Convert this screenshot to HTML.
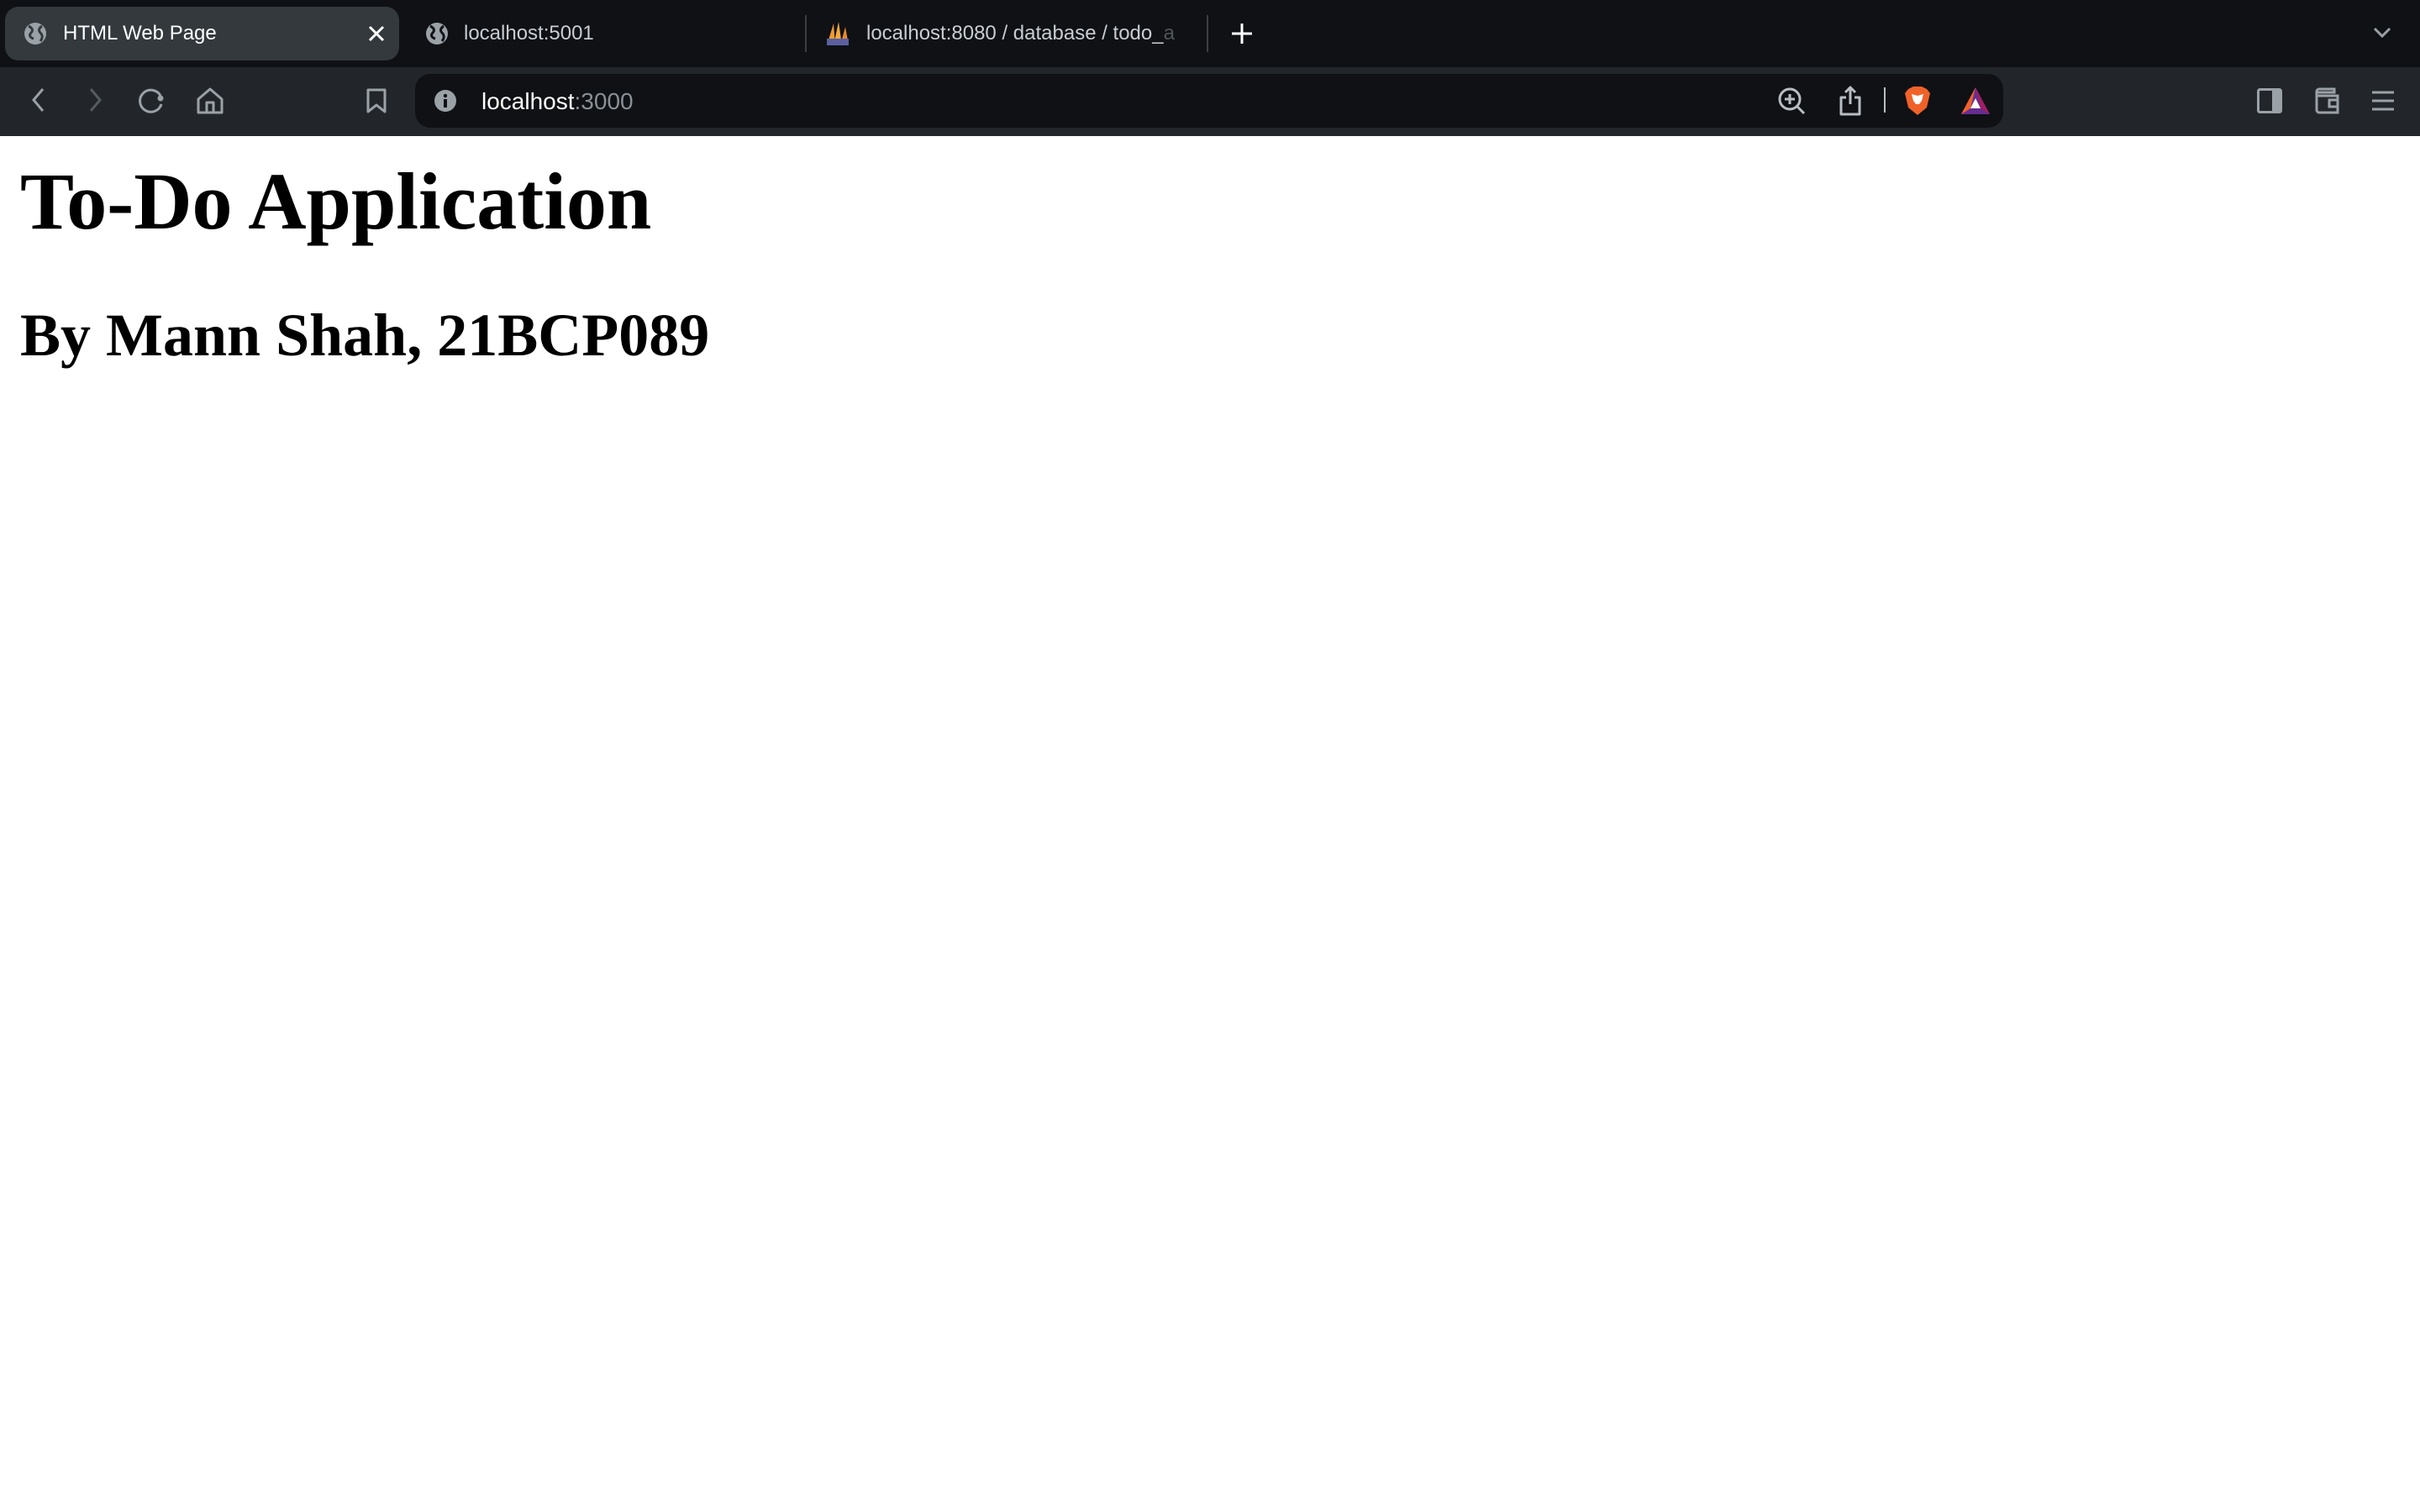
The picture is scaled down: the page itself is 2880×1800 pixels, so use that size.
<!DOCTYPE html>
<html><head><meta charset="utf-8"><style>
html,body{margin:0;padding:0;width:2880px;height:1800px;overflow:hidden;background:#fff;position:relative;font-family:"Liberation Sans",sans-serif}
.abs{position:absolute}
#tabs{left:0;top:0;width:2880px;height:80px;background:#0f1115}
#tool{left:0;top:80px;width:2880px;height:82px;background:#22262a}
.t{position:absolute;font-size:24px;line-height:24px;white-space:nowrap}
h1,h2{position:absolute;margin:0;font-family:"Liberation Serif",serif;font-weight:bold;line-height:1;left:24px;color:#000;white-space:nowrap}
h1{font-size:96px;top:192px}
h2{font-size:72px;top:363px}
svg{position:absolute;overflow:visible}
</style></head><body>
<div id="tabs" class="abs"></div>
<div class="abs" style="left:6px;top:8px;width:469px;height:64px;background:#33393d;border-radius:16px"></div>
<!-- globe icons -->
<svg style="left:28px;top:26px" width="28" height="28" viewBox="0 0 28 28"><circle cx="14" cy="14" r="13" fill="#9aa1a7"/><path d="M6 5c4 2 6 5 3 8s-1 6 3 7M22 5c-3 2-5 5-2 8s3 6 0 10" stroke="#33393d" stroke-width="3" fill="none"/></svg>
<div class="t" style="left:75px;top:28px;color:#fff">HTML Web Page</div>
<svg style="left:438px;top:30px" width="20" height="20"><path d="M2 2L18 18M18 2L2 18" stroke="#fff" stroke-width="3"/></svg>
<svg style="left:506px;top:26px" width="28" height="28" viewBox="0 0 28 28"><circle cx="14" cy="14" r="13" fill="#9aa1a7"/><path d="M6 5c4 2 6 5 3 8s-1 6 3 7M22 5c-3 2-5 5-2 8s3 6 0 10" stroke="#0f1115" stroke-width="3" fill="none"/></svg>
<div class="t" style="left:552px;top:28px;color:#c8cdd1">localhost:5001</div>
<div class="abs" style="left:958px;top:18px;width:2px;height:44px;background:#3a3f44"></div>
<svg style="left:982px;top:24px" width="30" height="32"><path d="M2 30L10 4L12 30Z" fill="#f29a2e"/><path d="M10 30L16 2L20 30Z" fill="#f6a93b"/><path d="M18 30L24 8L28 30Z" fill="#e8892a"/><rect x="2" y="22" width="26" height="8" fill="#5a5fa0"/></svg>
<div class="t" style="left:1031px;top:28px;color:#c8cdd1">localhost:8080 / database / todo_<span style="opacity:.35">a</span></div>
<div class="abs" style="left:1436px;top:18px;width:2px;height:44px;background:#3a3f44"></div>
<svg style="left:1465px;top:27px" width="26" height="26"><path d="M13 1V25M1 13H25" stroke="#fff" stroke-width="3"/></svg>
<svg style="left:2824px;top:32px" width="22" height="14"><path d="M2 2L11 11L20 2" stroke="#9aa1a7" stroke-width="3" fill="none"/></svg>

<div id="tool" class="abs"></div>
<svg style="left:36px;top:104px" width="20" height="30"><path d="M15 2L4 15L15 28" stroke="#9aa1a7" stroke-width="3" fill="none"/></svg>
<svg style="left:103px;top:104px" width="20" height="30"><path d="M5 2L16 15L5 28" stroke="#555b60" stroke-width="3" fill="none"/></svg>
<svg style="left:165px;top:104px" width="32" height="32"><path d="M26 10A13 13 0 1 0 27 20" stroke="#9aa1a7" stroke-width="3" fill="none"/><circle cx="26" cy="13" r="3.5" fill="#9aa1a7"/></svg>
<svg style="left:234px;top:104px" width="32" height="32"><path d="M2 14L16 2L30 14V30H2Z M12 30V18H20V30" stroke="#9aa1a7" stroke-width="3" fill="none" stroke-linejoin="round"/></svg>
<svg style="left:436px;top:105px" width="24" height="30"><path d="M2 2H22V28L12 20L2 28Z" stroke="#9aa1a7" stroke-width="3" fill="none" stroke-linejoin="round"/></svg>

<div class="abs" style="left:494px;top:88px;width:1890px;height:64px;background:#0f1115;border-radius:18px"></div>
<svg style="left:516px;top:106px" width="28" height="28"><circle cx="14" cy="14" r="13" fill="#9aa1a7"/><rect x="12" y="12" width="4" height="10" fill="#0f1115"/><circle cx="14" cy="8" r="2.2" fill="#0f1115"/></svg>
<div class="t" style="left:573px;top:107px;font-size:28px;line-height:28px;color:#fff">localhost<span style="color:#8a9096">:3000</span></div>

<svg style="left:2116px;top:104px" width="36" height="36"><circle cx="14" cy="14" r="12" stroke="#b8bec3" stroke-width="3" fill="none"/><path d="M14 8V20M8 14H20M23 23L31 31" stroke="#b8bec3" stroke-width="3"/></svg>
<svg style="left:2188px;top:102px" width="28" height="36"><path d="M14 2V22M8 8L14 2L20 8M9 14H3V34H25V14H19" stroke="#b8bec3" stroke-width="3" fill="none" stroke-linejoin="round"/></svg>
<div class="abs" style="left:2242px;top:104px;width:2px;height:30px;background:#b8bec3"></div>
<svg style="left:2266px;top:102px" width="32" height="36" viewBox="0 0 32 36"><path d="M5 4L11 1H21L27 4L31 9L27 26L16 35L5 26L1 9Z" fill="#f0622a"/><path d="M9 10L16 12L23 10L21 18L18 22H14L11 18Z" fill="#fff"/></svg>
<svg style="left:2333px;top:103px" width="36" height="34" viewBox="0 0 36 34"><path d="M18 1L1 33H35Z" fill="#662d91"/><path d="M18 1L1 33L12 26Z" fill="#f0622a"/><path d="M18 1L35 33L24 26Z" fill="#9e1f63"/><path d="M18 14L12 26H24Z" fill="#fff"/></svg>

<svg style="left:2686px;top:105px" width="30" height="30"><rect x="1.5" y="1.5" width="27" height="27" rx="2" stroke="#9aa1a7" stroke-width="3" fill="none"/><rect x="18" y="1.5" width="10" height="27" fill="#9aa1a7"/></svg>
<svg style="left:2754px;top:104px" width="32" height="32"><path d="M4 6H24V2H6A3 3 0 0 0 3 5V27A3 3 0 0 0 6 30H28V10H4" stroke="#9aa1a7" stroke-width="3" fill="none"/><rect x="18" y="15" width="10" height="8" stroke="#9aa1a7" stroke-width="3" fill="none"/></svg>
<svg style="left:2822px;top:108px" width="28" height="24"><path d="M1 2H27M1 12H27M1 22H27" stroke="#9aa1a7" stroke-width="3"/></svg>

<h1>To-Do Application</h1>
<h2>By Mann Shah, 21BCP089</h2>
</body></html>
